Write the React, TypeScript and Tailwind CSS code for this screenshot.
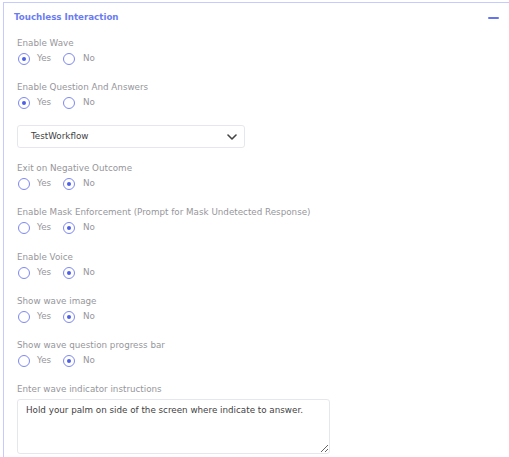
import React from "react";

const font = { fontFamily: '"DejaVu Sans", "Noto Sans", sans-serif' };

function Radio({ checked }: { checked: boolean }) {
  return (
    <span className="flex h-[12px] w-[12px] items-center justify-center rounded-full border-[1.5px] border-[#7d88f2] bg-white">
      {checked && <span className="h-[4px] w-[4px] rounded-full bg-[#4f5fe8]" />}
    </span>
  );
}

function YesNo({ label, value }: { label: string; value: boolean }) {
  return (
    <div className="flex flex-col">
      <div className="h-[14px] text-[8.75px] leading-[14px] text-[#96969b]">{label}</div>
      <div className="mt-[2px] flex h-[14px] items-center">
        <span className="ml-[1px]"><Radio checked={value} /></span>
        <span className="ml-[7px] w-[26px] text-[8.75px] text-[#96969b]">Yes</span>
        <Radio checked={!value} />
        <span className="ml-[8px] text-[8.75px] text-[#96969b]">No</span>
      </div>
    </div>
  );
}

export default function App() {
  return (
    <div className="h-[457px] w-[509px] overflow-hidden bg-white" style={font}>
      <div className="ml-[3px] mt-[2px] h-[480px] w-[520px] border-l border-t border-[#c5cbfa] bg-white">
        <div className="flex h-[30px] w-[506px] items-center justify-between pl-[10px] pr-[11px]">
          <span className="text-[8.7px] font-semibold text-[#6b7cf2]">Touchless Interaction</span>
          <span className="block h-[2px] w-[11px] rounded bg-[#6574ee]" />
        </div>
        <div className="flex flex-col pl-[13px] pt-[3px]">
          <YesNo label="Enable Wave" value={true} />
          <div className="h-[14px]" />
          <YesNo label="Enable Question And Answers" value={true} />
          <div className="mt-[15px] flex h-[23px] w-[228px] items-center justify-between rounded-[3px] border border-[#e6e7ec] pl-[13px] pr-[7px]">
            <span className="text-[8.75px] text-[#3f3f44]">TestWorkflow</span>
            <svg width="10" height="6" viewBox="0 0 10 6">
              <path d="M1 1 L5 5 L9 1" fill="none" stroke="#444" strokeWidth="1.6" strokeLinecap="round" strokeLinejoin="round" />
            </svg>
          </div>
          <div className="h-[13px]" />
          <YesNo label="Exit on Negative Outcome" value={false} />
          <div className="h-[14px]" />
          <YesNo label="Enable Mask Enforcement (Prompt for Mask Undetected Response)" value={false} />
          <div className="h-[15px]" />
          <YesNo label="Enable Voice" value={false} />
          <div className="h-[14px]" />
          <YesNo label="Show wave image" value={false} />
          <div className="h-[14px]" />
          <YesNo label="Show wave question progress bar" value={false} />
          <div className="mt-[14px] h-[14px] text-[8.75px] leading-[14px] text-[#96969b]">Enter wave indicator instructions</div>
          <textarea
            className="mt-[3px] h-[55px] w-[313px] resize-y rounded-[3px] border border-[#e6e7ec] px-[8px] py-[4px] text-[8.75px] text-[#3f3f44] outline-none"
            style={font}
            defaultValue="Hold your palm on side of the screen where indicate to answer."
          />
        </div>
      </div>
    </div>
  );
}
